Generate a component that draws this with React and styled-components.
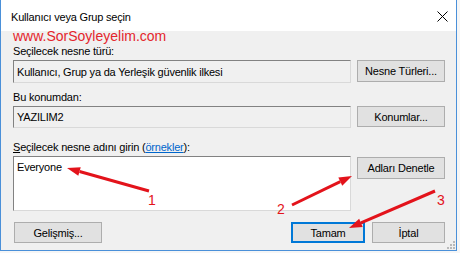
import React from 'react'
import styled, { createGlobalStyle } from 'styled-components'

const GlobalStyle = createGlobalStyle`
  html, body {
    margin: 0;
    padding: 0;
    background: #f6f6f6;
  }
  body {
    width: 460px;
    height: 253px;
    overflow: hidden;
    font-family: "Liberation Sans", Arial, sans-serif;
  }
`

const Stage = styled.div`
  position: relative;
  width: 460px;
  height: 253px;
`

const Window = styled.div`
  width: 457px;
  height: 251px;
  box-sizing: border-box;
  border: 1px solid #4a90d9;
  border-top: none;
  display: flex;
  flex-direction: column;
  background: #f0f0f0;
  font-size: 11px;
  letter-spacing: -0.2px;
  color: #000;
`

const TitleBar = styled.div`
  height: 31px;
  flex: none;
  box-sizing: border-box;
  background: #fff;
  display: flex;
  align-items: center;
  justify-content: space-between;
  padding: 2px 8px 0 10px;
  line-height: 14px;
`

const Body = styled.div`
  flex: 1;
  display: flex;
  flex-direction: column;
  padding: 13px 11px 0 12px;
`

const Label = styled.div`
  line-height: 14px;
  margin-top: ${p => p.$top || 0}px;
  margin-bottom: 2px;
  white-space: nowrap;
`

const Link = styled.span`
  color: #0066cc;
  text-decoration: underline;
`

const Row = styled.div`
  display: grid;
  grid-template-columns: 338px 88px;
  column-gap: 6px;
  align-items: start;
`

const Field = styled.div`
  height: ${p => p.$h}px;
  box-sizing: border-box;
  border: 1px solid #d9d9d9;
  border-top-color: #828282;
  border-left-color: #828282;
  background: ${p => (p.$readOnly ? '#f0f0f0' : '#ffffff')};
  padding: ${p => (p.$readOnly ? '0 3px' : '3px 3px 0')};
  display: flex;
  align-items: ${p => (p.$readOnly ? 'center' : 'flex-start')};
  line-height: 14px;
  white-space: nowrap;
`

const Button = styled.div`
  height: ${p => p.$h || 22}px;
  width: ${p => p.$w || 88}px;
  box-sizing: border-box;
  border: ${p => (p.$default ? '2px solid #0078d7' : '1px solid #adadad')};
  background: #e1e1e1;
  display: flex;
  align-items: center;
  justify-content: center;
  margin-top: ${p => p.$top || 0}px;
  white-space: nowrap;
`

const Footer = styled.div`
  display: flex;
  align-items: center;
  gap: 7px;
  margin-top: 11px;
  padding-left: 1px;
`

const Spacer = styled.div`
  flex: 1;
`

const Watermark = styled.div`
  position: absolute;
  left: 13px;
  top: 28px;
  font-size: 14px;
  line-height: 16px;
  color: #e4262c;
  white-space: nowrap;
`

const Overlay = styled.svg`
  position: absolute;
  left: 0;
  top: 0;
  pointer-events: none;
`

const arrows = [
  { from: [149, 191], to: [67, 168], n: '1', nx: 148, ny: 205 },
  { from: [292, 205], to: [352, 176], n: '2', nx: 277, ny: 214 },
  { from: [435, 191], to: [349, 228], n: '3', nx: 437, ny: 205 },
]

function arrowHead(from, to, len = 13, half = 4.5) {
  const dx = to[0] - from[0]
  const dy = to[1] - from[1]
  const l = Math.hypot(dx, dy)
  const ux = dx / l
  const uy = dy / l
  const bx = to[0] - ux * len
  const by = to[1] - uy * len
  return {
    base: [bx, by],
    points: `${to[0]},${to[1]} ${bx - uy * half},${by + ux * half} ${bx + uy * half},${by - ux * half}`,
  }
}

const CloseIcon = () => (
  <svg width="11" height="11" viewBox="0 0 11 11">
    <path d="M0.5 0.5 L10.5 10.5 M10.5 0.5 L0.5 10.5" stroke="#000" strokeWidth="1" fill="none" />
  </svg>
)

const grip = [
  [453, 241],
  [450, 244], [453, 244],
  [447, 247], [450, 247], [453, 247],
]

export default function App() {
  return (
    <Stage>
      <GlobalStyle />
      <Window>
        <TitleBar>
          <span>Kullanıcı veya Grup seçin</span>
          <CloseIcon />
        </TitleBar>
        <Body>
          <Label>Seçilecek nesne türü:</Label>
          <Row>
            <Field $h={23} $readOnly>Kullanıcı, Grup ya da Yerleşik güvenlik ilkesi</Field>
            <Button>Nesne Türleri...</Button>
          </Row>

          <Label $top={7}>Bu konumdan:</Label>
          <Row>
            <Field $h={22} $readOnly>YAZILIM2</Field>
            <Button $h={21}>Konumlar...</Button>
          </Row>

          <Label $top={12}>
            <u>S</u>eçilecek nesne adını girin (<Link>örnekler</Link>):
          </Label>
          <Row>
            <Field $h={55}>Everyone</Field>
            <Button $top={1}>Adları Denetle</Button>
          </Row>

          <Footer>
            <Button $h={21}>Gelişmiş...</Button>
            <Spacer />
            <Button $h={21} $w={74} $default>Tamam</Button>
            <Button $h={21} $w={73}>İptal</Button>
          </Footer>
        </Body>
      </Window>

      <Watermark>www.SorSoyleyelim.com</Watermark>

      <Overlay width="460" height="253" viewBox="0 0 460 253">
        {grip.map(([x, y], i) => (
          <rect key={i} x={x} y={y} width="2" height="2" fill="#b9b9b9" />
        ))}
        {arrows.map((a, i) => {
          const h = arrowHead(a.from, a.to)
          return (
            <g key={i}>
              <line x1={a.from[0]} y1={a.from[1]} x2={h.base[0]} y2={h.base[1]} stroke="#e3131b" strokeWidth="3" />
              <polygon points={h.points} fill="#e3131b" />
              <text x={a.nx} y={a.ny} fontSize="14" fill="#e3131b" fontFamily="Liberation Sans, Arial, sans-serif">{a.n}</text>
            </g>
          )
        })}
      </Overlay>
    </Stage>
  )
}
